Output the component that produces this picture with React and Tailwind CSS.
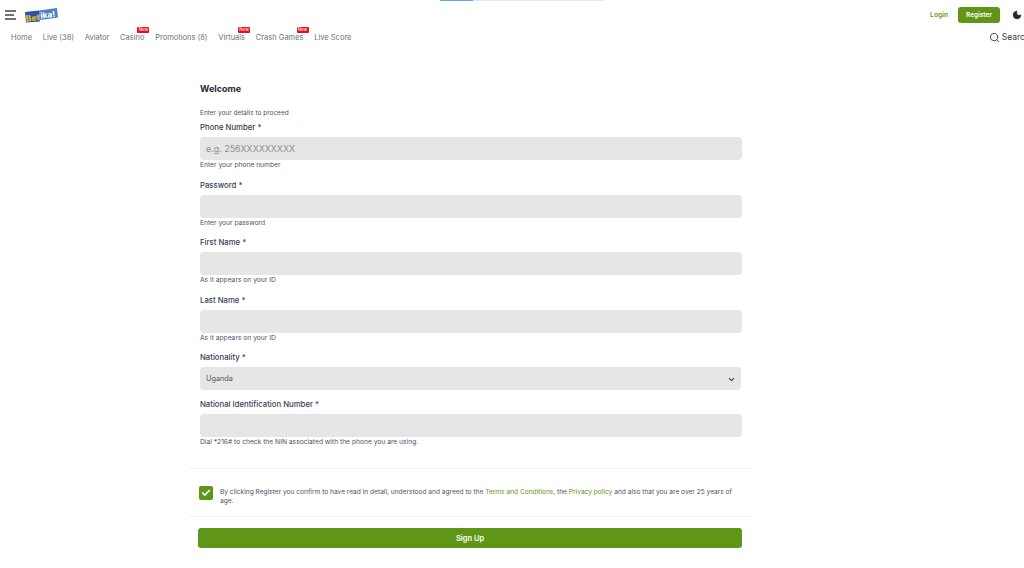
import React from 'react';
import {Check, ChevronDown, Moon, Search} from 'lucide-react';

const nav_items = [
    {label: "Home"},
    {label: "Live (38)"},
    {label: "Aviator"},
    {label: "Casino", is_new: true},
    {label: "Promotions (8)"},
    {label: "Virtuals", is_new: true},
    {label: "Crash Games", is_new: true},
    {label: "Live Score"},
];

function Logo() {
    return (
        <svg width="33" height="15" viewBox="0 0 33 15" className="block">
            <path d="M0 4 L14 2.5 L15 13.5 L1 14.5 Z" fill="#2f4fa8"/>
            <path d="M14 2.5 L32 0 L33 9.5 L15 12 Z" fill="#4a80c8"/>
            <g transform="rotate(-7 16 8)">
                <text x="0.5" y="12" fontSize="8.5" fontWeight="800" fill="#e0bd1c" fontFamily="Inter, sans-serif">Bet</text>
                <text x="15.5" y="10.5" fontSize="8" fontWeight="800" fill="#ffffff" fontFamily="Inter, sans-serif">ika!</text>
            </g>
        </svg>
    )
}

function Header() {
    return (
        <header className="w-full">
            <div className="flex h-[3px] justify-center pl-[20px]">
                <div className="h-[1px] w-[33px] bg-[#60a5fa]"></div>
                <div className="h-[1px] w-[131px] bg-[#e5e7eb]"></div>
            </div>
            <div className="flex h-[24px] items-center justify-between pl-[5px]">
                <div className="flex items-center gap-[9px]">
                    <div className="flex w-[11px] flex-col gap-[2.5px]">
                        <div className="h-[1.5px] w-[11px] bg-[#6b7280]"></div>
                        <div className="h-[1.5px] w-[9px] bg-[#6b7280]"></div>
                        <div className="h-[1.5px] w-[11px] bg-[#6b7280]"></div>
                    </div>
                    <Logo/>
                </div>
                <div className="flex items-center">
                    <span className="text-[6.7px] font-semibold text-[#659a1a]">Login</span>
                    <button className="ml-[10px] h-[16px] w-[42px] rounded-[3px] bg-[#5f9618] pt-[1px] text-[6.5px] font-semibold text-white">Register</button>
                    <Moon size={10} fill="#1f2937" className="ml-[12px] mr-[2px] text-[#1f2937]"/>
                </div>
            </div>
            <div className="flex h-[21px] items-center justify-between pl-[11px]">
                <nav className="flex gap-[10.7px] text-[7.5px] text-[#6b7280]">
                    {nav_items.map((item) => (
                        <div key={item.label} className="relative whitespace-nowrap">
                            {item.label}
                            {item.is_new && (
                                <span className="absolute right-[-5px] top-[-5px] h-[6px] w-[12px] rounded-[1px] bg-[#e5101a] text-center text-[4.5px] leading-[6px] text-white">New</span>
                            )}
                        </div>
                    ))}
                </nav>
                <div className="flex items-center gap-[2px] whitespace-nowrap text-[8.5px] text-[#374151]">
                    <Search size={11}/>
                    <span className="mr-[-6px]">Search</span>
                </div>
            </div>
        </header>
    )
}

function Field(props) {
    return (
        <div className="h-[57.5px]">
            <label className="block h-[10px] text-[7.75px] font-medium leading-[10px] text-[#374151]">{props.label} *</label>
            <div className="mt-[5px] flex h-[23px] items-center rounded-[4px] bg-[#e6e6e6] px-[6px] text-[8.9px] text-[#8a8f98]">{props.placeholder}</div>
            <p className="mt-[1px] text-[6.7px] leading-[8px] text-[#4b5563]">{props.help}</p>
        </div>
    )
}

function NationalitySelect() {
    return (
        <div className="h-[47px]">
            <label className="block h-[10px] text-[7.75px] font-medium leading-[10px] text-[#374151]">Nationality *</label>
            <div className="mt-[5px] flex h-[23px] w-[541px] items-center justify-between rounded-[4px] bg-[#e6e6e6] pl-[6px] pr-[5px] pt-[1px] text-[7.3px] text-[#4b5563]">
                Uganda
                <ChevronDown size={9} strokeWidth={3} className="text-[#374151]"/>
            </div>
        </div>
    )
}

function SignUpForm() {
    return (
        <main className="ml-[189px] mt-[35px] w-[563px]">
            <div className="ml-[11px] w-[542px]">
                <h1 className="text-[9px] font-bold leading-[12px] text-[#1f2937]">Welcome</h1>
                <p className="mt-[14px] text-[6.5px] leading-[8px] text-[#4b5563]">Enter your details to proceed</p>
                <div className="mt-[5px]">
                    <Field label="Phone Number" placeholder="e.g. 256XXXXXXXXX" help="Enter your phone number"/>
                    <Field label="Password" help="Enter your password"/>
                    <Field label="First Name" help="As it appears on your ID"/>
                    <Field label="Last Name" help="As it appears on your ID"/>
                    <NationalitySelect/>
                    <Field label="National Identification Number" help={"Dial *216# to check the NIN associated with the phone you are using."}/>
                </div>
            </div>
            <div className="mt-[11.5px] flex h-[49px] items-center border-y border-[#f3f4f6] pl-[10px]">
                <div className="mt-[1px] flex h-[14px] w-[14px] shrink-0 items-center justify-center rounded-[2px] bg-[#5f9618]">
                    <Check size={10} strokeWidth={4} className="text-white"/>
                </div>
                <p className="ml-[7px] mt-[8px] w-[520px] text-[6.6px] leading-[9px] text-[#4b5563]">
                    By clicking Register you confirm to have read in detail, understood and agreed to the <span className="text-[#5f9618]">Terms and Conditions</span>, the <span className="text-[#5f9618]">Privacy policy</span> and also that you are over 25 years of age.
                </p>
            </div>
            <button className="ml-[9px] mt-[11px] h-[20px] w-[544px] rounded-[3px] bg-[#5f9618] pt-[1px] text-[7.5px] font-semibold text-white">Sign Up</button>
        </main>
    )
}

export default function App() {
    return (
        <div className="h-[568px] w-[1024px] overflow-hidden bg-white font-['Inter',sans-serif]">
            <Header/>
            <SignUpForm/>
        </div>
    )
}
